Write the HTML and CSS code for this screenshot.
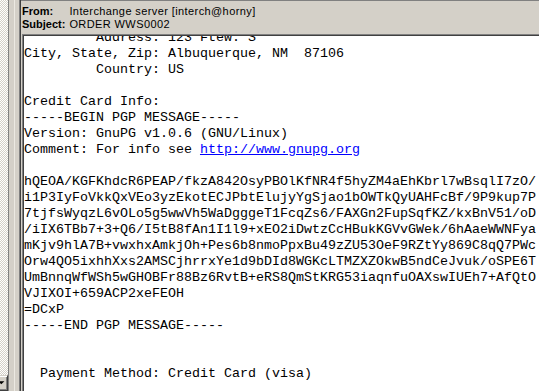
FILE: index.html
```html
<!DOCTYPE html>
<html lang="en">
<head>
    <meta charset="UTF-8">
    <title>ORDER WWS0002</title>
    <link rel="stylesheet" href="styles.css">
</head>
<body>
    <div class="folder-scroll">
        <div class="scroll-track"></div>
        <div class="scroll-btn">
            <svg width="8" height="14" viewBox="0 0 8 14"><polygon points="-2,5 5,5 1.5,8.5" fill="#000"/></svg>
        </div>
    </div>
    <div class="splitter"></div>

    <div class="reader">
        <div class="msg-header">
            <span class="hdr-label">From:</span>
            <span class="hdr-value">Interchange server [interch@horny]</span>
            <span class="hdr-label">Subject:</span>
            <span class="hdr-value">ORDER WWS0002</span>
        </div>
        <div class="msg-frame">
            <div class="msg-body">
<pre class="msg-text">         Address: 123 Ftew. S
City, State, Zip: Albuquerque, NM  87106
         Country: US

Credit Card Info:
-----BEGIN PGP MESSAGE-----
Version: GnuPG v1.0.6 (GNU/Linux)
Comment: For info see <a href="#">http://www.gnupg.org</a>

hQEOA/KGFKhdcR6PEAP/fkzA842OsyPBOlKfNR4f5hyZM4aEhKbrl7wBsqlI7zO/
i1P3IyFoVkkQxVEo3yzEkotECJPbtElujyYgSjao1bOWTkQyUAHFcBf/9P9kup7P
7tjfsWyqzL6vOLo5g5wwVh5WaDgggeT1FcqZs6/FAXGn2FupSqfKZ/kxBnV51/oD
/iIX6TBb7+3+Q6/I5tB8fAn1I1l9+xEO2iDwtzCcHBukKGVvGWek/6hAaeWWNFya
mKjv9hlA7B+vwxhxAmkjOh+Pes6b8nmoPpxBu49zZU53OeF9RZtYy869C8qQ7PWc
Orw4QO5ixhhXxs2AMSCjhrrxYe1d9bDId8WGKcLTMZXZOkwB5ndCeJvuk/oSPE6T
UmBnnqWfWSh5wGHOBFr88Bz6RvtB+eRS8QmStKRG53iaqnfuOAXswIUEh7+AfQtO
VJIXOI+659ACP2xeFEOH
=DCxP
-----END PGP MESSAGE-----


  Payment Method: Credit Card (visa)
</pre>
            </div>
        </div>
    </div>
</body>
</html>
```

FILE: styles.css
```css
body {
    margin: 0;
    height: 391px;
    overflow: hidden;
    display: flex;
    background: #d4d0c8;
    font-family: "Liberation Sans", Arial, sans-serif;
    font-size: 11px;
    color: #000;
}

/* left pane's scrollbar, mostly hidden */
.folder-scroll {
    width: 8px;
    display: flex;
    flex-direction: column;
}

.scroll-track {
    flex: 1;
    background-color: #ffffff;
    background-image:
        linear-gradient(45deg, #d4d0c8 25%, transparent 25%, transparent 75%, #d4d0c8 75%),
        linear-gradient(45deg, #d4d0c8 25%, transparent 25%, transparent 75%, #d4d0c8 75%);
    background-size: 2px 2px;
    background-position: 0 0, 1px 1px;
}

.scroll-btn {
    height: 14px;
    background: #d4d0c8;
    border-top: 1px solid #d4d0c8;
    border-bottom: 1px solid #404040;
    border-right: 1px solid #404040;
    box-shadow: inset 0 1px 0 #ffffff, inset -1px -1px 0 #808080;
    display: flex;
}

.splitter {
    width: 13px;
    background: linear-gradient(to right,
        #808080 0, #808080 1px,
        #d4d0c8 1px, #d4d0c8 6px,
        #ece9e2 6px, #ece9e2 7px,
        #d4d0c8 7px, #d4d0c8 11px,
        #808080 11px, #808080 12px,
        #404040 12px);
}

.reader {
    flex: 1;
    min-width: 0;
    display: flex;
    flex-direction: column;
    border-top: 1px solid #808080;
}

.msg-header {
    display: grid;
    grid-template-columns: auto 1fr;
    column-gap: 4px;
    line-height: 13px;
    padding: 4px 0 3px 1px;
    white-space: nowrap;
}

.hdr-label {
    font-weight: bold;
}

.hdr-value {
    letter-spacing: 0.4px;
}

.msg-frame {
    flex: 1;
    min-height: 0;
    margin-left: 1px;
    border-top: 1px solid #808080;
    border-left: 1px solid #808080;
    display: flex;
}

.msg-body {
    flex: 1;
    min-width: 0;
    background: #ffffff;
    border-top: 1px solid #404040;
    border-left: 1px solid #404040;
    overflow: hidden;
}

.msg-text {
    margin: -6px 0 0 0;
    font-family: "Liberation Mono", "Courier New", monospace;
    font-size: 13.33px;
    line-height: 16px;
    white-space: pre;
}

.msg-text a {
    color: #0000ff;
    text-decoration: underline;
}
```
